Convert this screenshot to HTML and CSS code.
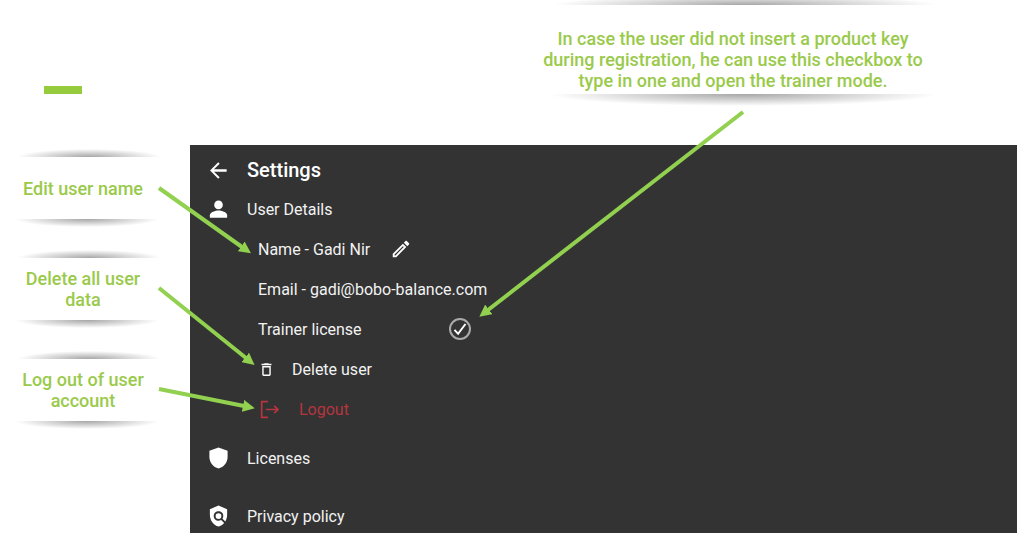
FILE: index.html
```html
<!DOCTYPE html>
<html lang="en">
<head>
<meta charset="utf-8">
<meta name="viewport" content="width=device-width, initial-scale=1">
<title>Settings guide</title>
<link rel="stylesheet" href="styles.css">
</head>
<body>
<main class="slide">
  <header class="slide-head">
    <div class="accent"></div>
    <p class="callout callout-wide"><span class="callout-text">In case the user did not insert a product key<br>during registration, he can use this checkbox to<br>type in one and open the trainer mode.</span></p>
  </header>
  <aside class="notes">
    <p class="callout"><span class="callout-text">Edit user name</span></p>
    <p class="callout"><span class="callout-text">Delete all user<br>data</span></p>
    <p class="callout"><span class="callout-text">Log out of user<br>account</span></p>
  </aside>
  <section class="panel">
    <div class="row row-title">
      <button class="icon-button" type="button" aria-label="Back">
        <svg class="icon" viewBox="0 0 24 24"><path d="M20.500 10.800H7.300l5.900-5.900L11.700 3.400 3.200 12l8.500 8.600 1.500-1.500L7.300 13.200h13.200z"/></svg>
      </button>
      <h1 class="title">Settings</h1>
    </div>
    <div class="row">
      <svg class="icon" viewBox="0 0 24 24"><circle cx="12" cy="7.200" r="4.500"/><path d="M3 20.500v-2.600c0-3.200 6-4.900 9-4.900s9 1.700 9 4.900v2.600z"/></svg>
      <h2 class="label">User Details</h2>
    </div>
    <ul class="details">
      <li class="item">
        <span class="label">Name - Gadi Nir</span>
        <button class="icon-button" type="button" aria-label="Edit name">
          <svg class="icon icon-edit" viewBox="0 0 24 24"><path d="M14.060 9.020l.92.92L5.920 19H5v-.92l9.060-9.060M17.660 3c-.25 0-.51.1-.7.290l-1.830 1.830 3.750 3.750 1.830-1.830c.390-.390.390-1.020 0-1.410l-2.340-2.340c-.2-.2-.450-.290-.710-.290zm-3.600 3.190L3 17.250V21h3.750L17.810 9.940l-3.750-3.750z"/></svg>
        </button>
      </li>
      <li class="item"><span class="label">Email - gadi@bobo-balance.com</span></li>
      <li class="item">
        <label class="label license" for="trainer">Trainer license</label>
        <span class="check">
          <input class="check-box" id="trainer" type="checkbox" checked>
          <svg class="check-mark" viewBox="0 0 22 22"><path d="M5.500 11.800l3.600 4L16.500 6"/></svg>
        </span>
      </li>
      <li class="item">
        <button class="action" type="button">
          <svg class="icon icon-trash" viewBox="0 0 24 24"><path d="M6 19c0 1.100.9 2 2 2h8c1.100 0 2-.9 2-2V7H6v12zM8 9h8v10H8V9zm7.500-5l-1-1h-5l-1 1H5v2h14V4z"/></svg>
          Delete user
        </button>
      </li>
      <li class="item">
        <button class="action action-logout" type="button">
          <svg class="icon icon-logout" viewBox="0 0 20 20"><path d="M9.500 2.500H3.500v15h6M7.500 10H19M15.500 6.500L19 10l-3.500 3.500"/></svg>
          Logout
        </button>
      </li>
    </ul>
    <a class="row row-link" href="#licenses">
      <svg class="icon icon-shield" viewBox="0 0 24 24"><path d="M12 1L2.500 4.500V11c0 5.600 4 10.600 9.500 12 5.500-1.400 9.500-6.400 9.500-12V4.500z"/></svg>
      <span class="label">Licenses</span>
    </a>
    <a class="row row-link row-last" href="#privacy">
      <svg class="icon icon-shield" viewBox="0 0 24 24"><path d="M21 5l-9-4-9 4v6c0 5.550 3.840 10.740 9 12 2.300-.560 4.330-1.900 5.880-3.710l-3.120-3.120c-1.940 1.290-4.580 1.070-6.290-.640-1.950-1.950-1.950-5.120 0-7.070 1.950-1.950 5.120-1.950 7.070 0 1.710 1.710 1.920 4.350.640 6.290l2.900 2.900C20.290 15.690 21 13.380 21 11V5z"/><circle cx="12" cy="12" r="3"/></svg>
      <span class="label">Privacy policy</span>
    </a>
  </section>
  <svg class="arrows" width="1024" height="536" viewBox="0 0 1024 536" aria-hidden="true">
    <defs>
      <marker id="head" viewBox="0 0 12 12" refX="1" refY="6" markerWidth="12" markerHeight="12" markerUnits="userSpaceOnUse" orient="auto"><path class="arrow-head" d="M0 0l12 6-12 6z"/></marker>
    </defs>
    <path class="arrow" marker-end="url(#head)" d="M159 188L242 247"/>
    <path class="arrow" marker-end="url(#head)" d="M159 288L246 358"/>
    <path class="arrow" marker-end="url(#head)" d="M159 389L244 406"/>
    <path class="arrow" marker-end="url(#head)" d="M743 112L488 310"/>
  </svg>
</main>
</body>
</html>
```

FILE: styles.css
```css
* {
  box-sizing: border-box;
}

body {
  margin: 0;
  background: #fff;
  font-family: Roboto, "Liberation Sans", sans-serif;
  font-size: 16px;
  color: #f2f2f2;
}

.slide {
  position: relative;
  display: grid;
  grid-template-columns: 190px 1fr;
  padding-right: 7px;
  overflow: hidden;
}

.slide-head {
  grid-column: 1 / -1;
  display: flex;
  justify-content: space-between;
  height: 145px;
  padding: 0 80px 0 44px;
}

.accent {
  width: 38px;
  height: 8px;
  margin-top: 86px;
  background: #97cb3e;
}

.callout {
  display: flex;
  flex-direction: column;
  margin: 0;
  color: #9aca4b;
  font-size: 18px;
  font-weight: 500;
  line-height: 21px;
  text-align: center;
}

.callout::before,
.callout::after {
  content: "";
  flex: none;
  width: 144px;
  height: 8px;
}

.callout::before {
  align-self: flex-end;
  background: radial-gradient(ellipse 50% 100% at 50% 100%, #a6a6a6, #fff);
}

.callout::after {
  background: radial-gradient(ellipse 50% 100% at 50% 0%, #a6a6a6, #fff);
}

.callout-text {
  display: grid;
  align-content: center;
  min-height: 62px;
  padding-right: 10px;
}

.callout-wide {
  width: 420px;
}

.callout-wide::before {
  width: 384px;
  height: 5px;
  background: radial-gradient(ellipse 50% 200% at 50% 100%, #a6a6a6, #fff);
}

.callout-wide::after {
  align-self: flex-end;
  width: 388px;
  height: 12px;
}

.callout-wide .callout-text {
  min-height: 89px;
  padding: 20px 0 0 12px;
}

.notes {
  display: flex;
  flex-direction: column;
  gap: 23px;
  padding: 4px 29px 0 15px;
}

.panel {
  padding-top: 5px;
  background: #333;
}

.row {
  display: flex;
  align-items: center;
  gap: 17px;
  height: 39px;
  padding-left: 17px;
}

.row-title {
  height: 40px;
}

.title {
  margin: 0;
  color: #fff;
  font-size: 20px;
  font-weight: 500;
}

.label {
  margin: 0;
  font-size: 16px;
  font-weight: 400;
}

.icon {
  display: block;
  flex: none;
  width: 23px;
  height: 23px;
  fill: #fff;
}

.icon-button,
.action {
  padding: 0;
  border: 0;
  background: none;
  color: inherit;
  font: inherit;
}

.details {
  margin: 0;
  padding: 0 0 0 68px;
  list-style: none;
}

.item {
  display: flex;
  align-items: center;
  height: 40px;
}

.icon-edit {
  width: 22px;
  height: 22px;
  margin-left: 20px;
}

.license {
  width: 191px;
}

.check {
  position: relative;
  width: 22px;
  height: 22px;
}

.check-box {
  display: block;
  width: 22px;
  height: 22px;
  margin: 0;
  border: 2px solid #aaa;
  border-radius: 50%;
  appearance: none;
}

.check-mark {
  position: absolute;
  inset: 0;
  fill: none;
  stroke: #fff;
  stroke-width: 2;
  pointer-events: none;
}

.action {
  display: flex;
  align-items: center;
  gap: 17px;
}

.icon-trash {
  width: 17px;
  height: 17px;
}

.action-logout {
  gap: 20px;
  color: #b6353f;
}

.icon-logout {
  width: 21px;
  height: 21px;
  fill: none;
  stroke: #b6353f;
  stroke-width: 1.6;
}

.row-link {
  height: 58px;
  color: inherit;
  text-decoration: none;
}

.row-last {
  height: 46px;
  padding-top: 12px;
}

.icon-shield {
  width: 23px;
  height: 24px;
}

.arrows {
  position: absolute;
  top: 0;
  left: 0;
  pointer-events: none;
}

.arrow {
  fill: none;
  stroke: #92d050;
  stroke-width: 4;
}

.arrow-head {
  fill: #92d050;
}
```
